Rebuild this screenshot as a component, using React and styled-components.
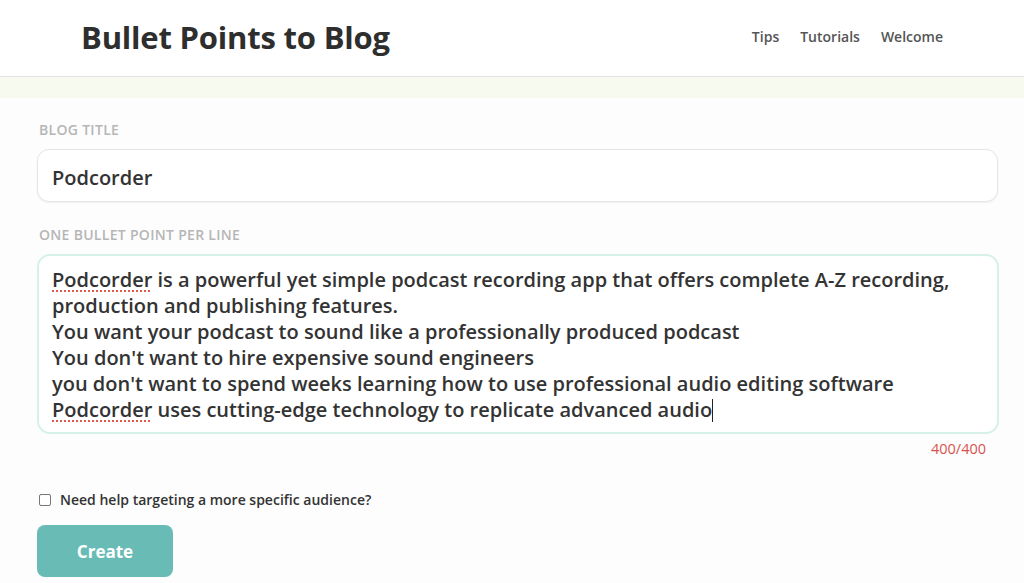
import React from "react";
import styled, { createGlobalStyle } from "styled-components";

const Global = createGlobalStyle`
  html, body { margin: 0; padding: 0; background: #fdfdfd; }
  body { font-family: "Open Sans", "Liberation Sans", sans-serif; color: #333; }
  * { box-sizing: border-box; }
`;

const Header = styled.header`
  height: 77px;
  background: #fff;
  border-bottom: 1px solid #e2e2e2;
  display: flex;
  align-items: center;
  justify-content: space-between;
  padding: 0 81px 0 81px;
`;

const Title = styled.h1`
  margin: 0;
  font-size: 31px;
  font-weight: 700;
  color: #2e2e2e;
  letter-spacing: -0.2px;
  padding-bottom: 3px;
`;

const Nav = styled.nav`
  display: flex;
  gap: 21px;
  padding-bottom: 4px;
`;

const NavLink = styled.a`
  font-size: 14px;
  font-weight: 600;
  color: #555;
  text-decoration: none;
`;

const Strip = styled.div`
  height: 21px;
  background: #f7faee;
`;

const Main = styled.main`
  padding: 20px 26px 0 37px;
  display: flex;
  flex-direction: column;
`;

const Label = styled.div`
  font-size: 14px;
  font-weight: 600;
  color: #b6b6b6;
  text-transform: uppercase;
  letter-spacing: 0.3px;
  padding-left: 2px;
  height: 22px;
  display: flex;
  align-items: center;
  margin-bottom: 9px;
`;

const Input = styled.div`
  height: 53px;
  border: 1px solid #e6e6e6;
  border-radius: 12px;
  background: #fff;
  box-shadow: 0 1px 2px rgba(0,0,0,0.06);
  display: flex;
  align-items: center;
  padding: 3px 14px 0;
  font-size: 20px;
  font-weight: 600;
  color: #333;
  margin-bottom: 21px;
`;

const Area = styled.div`
  height: 180px;
  border: 2px solid #d6f2e8;
  border-radius: 13px;
  background: #fff;
  padding: 11px 13px;
  font-size: 20px;
  font-weight: 600;
  line-height: 26px;
  color: #333;
  margin-right: -1px;
`;

const Line = styled.div`
  white-space: nowrap;
`;

const Misspelled = styled.span`
  text-decoration: underline dotted #e0594f;
  text-decoration-thickness: 2px;
  text-underline-offset: 3px;
`;

const Caret = styled.span`
  display: inline-block;
  width: 1px;
  height: 23px;
  background: #222;
  vertical-align: -5px;
`;

const Counter = styled.div`
  align-self: flex-end;
  margin-right: 12px;
  font-size: 14.5px;
  color: #d9534f;
  height: 28px;
  display: flex;
  align-items: center;
`;

const CheckRow = styled.label`
  display: flex;
  align-items: center;
  gap: 9px;
  margin-top: 28px;
  padding-left: 2px;
  font-size: 14px;
  font-weight: 600;
  color: #333;
`;

const Box = styled.span`
  width: 12px;
  height: 12px;
  border: 1px solid #777;
  border-radius: 2px;
  background: #fff;
`;

const Button = styled.button`
  margin-top: 16px;
  width: 136px;
  height: 52px;
  border: none;
  border-radius: 8px;
  background: #69bcb5;
  color: #fff;
  font-family: inherit;
  font-size: 17px;
  font-weight: 700;
`;

export default function App() {
  return (
    <>
      <Global />
      <Header>
        <Title>Bullet Points to Blog</Title>
        <Nav>
          <NavLink>Tips</NavLink>
          <NavLink>Tutorials</NavLink>
          <NavLink>Welcome</NavLink>
        </Nav>
      </Header>
      <Strip />
      <Main>
        <Label>Blog Title</Label>
        <Input>Podcorder</Input>
        <Label>One bullet point per line</Label>
        <Area>
          <Line><Misspelled>Podcorder</Misspelled> is a powerful yet simple podcast recording app that offers complete A-Z recording,</Line>
          <Line>production and publishing features.</Line>
          <Line>You want your podcast to sound like a professionally produced podcast</Line>
          <Line>You don't want to hire expensive sound engineers</Line>
          <Line>you don't want to spend weeks learning how to use professional audio editing software</Line>
          <Line><Misspelled>Podcorder</Misspelled> uses cutting-edge technology to replicate advanced audio<Caret /></Line>
        </Area>
        <Counter>400/400</Counter>
        <CheckRow>
          <Box />
          Need help targeting a more specific audience?
        </CheckRow>
        <Button>Create</Button>
      </Main>
    </>
  );
}
